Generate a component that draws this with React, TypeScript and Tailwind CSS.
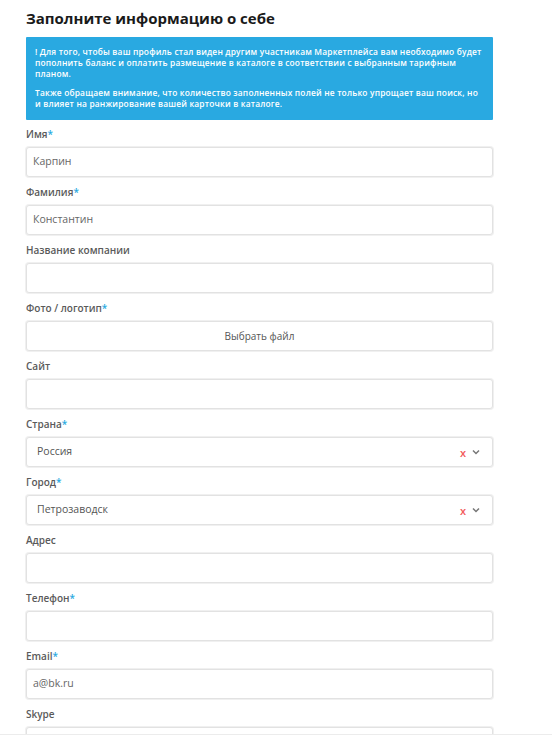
import React from "react";

const font = { fontFamily: '"Open Sans", "Noto Sans", sans-serif' };

function Label({ text, req }: { text: string; req?: boolean }) {
  return (
    <div className="h-[16px] leading-[16px] text-[10px] font-semibold text-[#5a5a5a] mb-[5px]">
      {text}
      {req && <span className="text-[#29a9e1]">*</span>}
    </div>
  );
}

function Input({ value }: { value?: string }) {
  return (
    <div className="h-[30px] border border-[#e2e2e2] rounded-[3px] flex items-center px-[6px] text-[10.5px] text-[#666] bg-white shadow-[0_0_0_1px_#f0f0f0]">
      {value}
    </div>
  );
}

function Select({ value }: { value: string }) {
  return (
    <div className="h-[30px] border border-[#e2e2e2] rounded-[3px] flex items-center pl-[10px] pr-[12px] text-[10.5px] text-[#555] bg-white shadow-[0_0_0_1px_#f0f0f0]">
      <span className="flex-1">{value}</span>
      <span className="text-[#f25b5b] text-[11px] font-semibold mr-[6px] leading-none">x</span>
      <svg width="8" height="6" viewBox="0 0 8 6">
        <path d="M1 1.5 L4 4.5 L7 1.5" stroke="#777" strokeWidth="1.5" fill="none" />
      </svg>
    </div>
  );
}

function Field({ label, req, children }: { label: string; req?: boolean; children: React.ReactNode }) {
  return (
    <div className="mb-[7px]">
      <Label text={label} req={req} />
      {children}
    </div>
  );
}

export default function App() {
  return (
    <div className="relative w-[552px] h-[741px] overflow-hidden bg-white" style={font}>
      <div className="pl-[26px] w-[493px]">
        <h1 className="pt-[7px] h-[37px] text-[15px] font-bold text-[#1a1a1a] leading-[22px]">
          Заполните информацию о себе
        </h1>
        <div className="bg-[#29a9e1] text-white text-[8.4px] leading-[11px] tracking-[0.18px] pl-[9px] pr-[4px] pt-[9px] pb-[9px] h-[83px] font-semibold rounded-[1px] whitespace-nowrap">
          <p>
            ! Для того, чтобы ваш профиль стал виден другим участникам Маркетплейса вам необходимо будет
            <br />
            пополнить баланс и оплатить размещение в каталоге в соответствии с выбранным тарифным
            <br />
            планом.
          </p>
          <p className="mt-[8px]">
            Также обращаем внимание, что количество заполненных полей не только упрощает ваш поиск, но
            <br />
            и влияет на ранжирование вашей карточки в каталоге.
          </p>
        </div>
        <div className="pt-[6px]">
          <Field label="Имя" req>
            <Input value="Карпин" />
          </Field>
          <Field label="Фамилия" req>
            <Input value="Константин" />
          </Field>
          <Field label="Название компании">
            <Input />
          </Field>
          <Field label="Фото / логотип" req>
            <div className="h-[30px] border border-[#e2e2e2] rounded-[3px] flex items-center justify-center text-[10px] text-[#555] bg-white shadow-[0_0_0_1px_#f0f0f0]">
              Выбрать файл
            </div>
          </Field>
          <Field label="Сайт">
            <Input />
          </Field>
          <Field label="Страна" req>
            <Select value="Россия" />
          </Field>
          <Field label="Город" req>
            <Select value="Петрозаводск" />
          </Field>
          <Field label="Адрес">
            <Input />
          </Field>
          <Field label="Телефон" req>
            <Input />
          </Field>
          <Field label="Email" req>
            <Input value="a@bk.ru" />
          </Field>
          <Field label="Skype">
            <Input />
          </Field>
        </div>
      </div>
      <div className="absolute left-0 top-[734px] w-[552px] h-[7px] bg-white border-t border-[#ececec]" />
    </div>
  );
}
